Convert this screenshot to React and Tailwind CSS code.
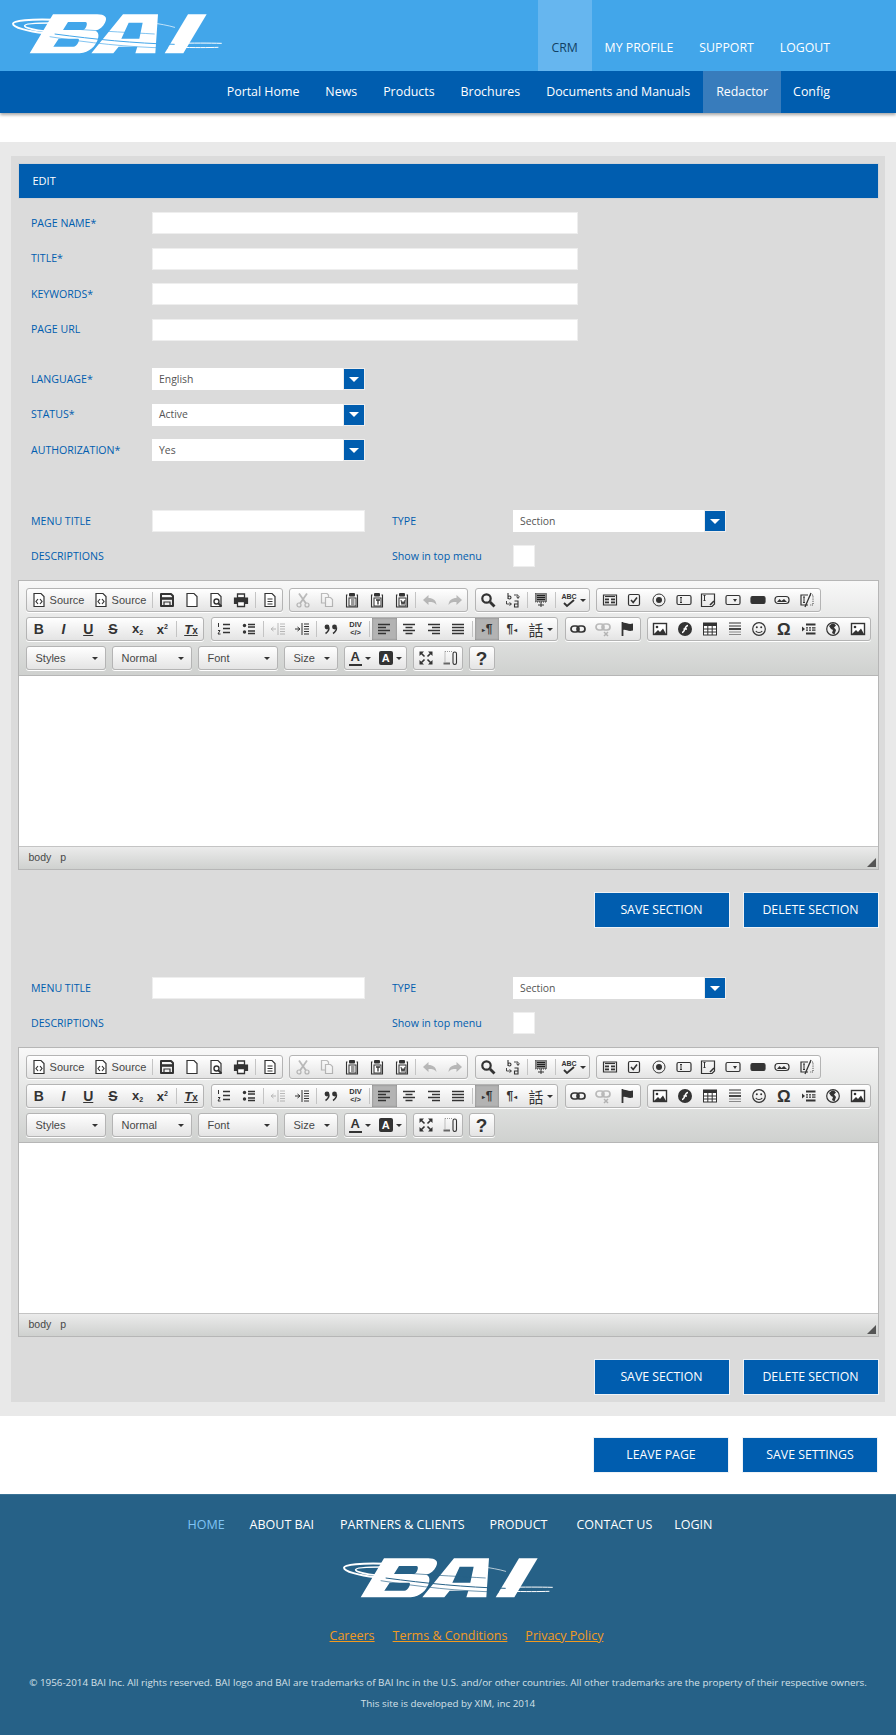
const Logo = ({ bg, className }) => (
  <svg viewBox="0 0 660 144" className={className}>
    <g fill="none" stroke="#fff" strokeLinecap="round">
      <path d="M135 29C70 27 15 31 15 41C15 52 60 64 110 70" strokeWidth="6" />
      <path d="M130 39C90 39 50 41 50 47C50 53 80 60 115 64" strokeWidth="5" />
      <path d="M500 100C560 99 600 99 640 100" strokeWidth="3" />
      <path d="M510 112C560 113 600 113 630 112" strokeWidth="3" />
      <path d="M430 38C455 42 480 46 500 52" strokeWidth="2" />
    </g>
    <path
      fillRule="evenodd"
      fill="#fff"
      d="M135 13H268C290 13 300 22 291 38C285 50 276 58 262 62C272 66 274 76 268 92C256 118 236 130 204 130H65ZM180 36L165 60H224C234 60 242 36 232 36ZM152 86L136 110H196C208 110 218 86 210 86Z"
    />
    <path
      fillRule="evenodd"
      fill="#fff"
      d="M345 13H450L442 130H382L388 110H332L316 130H250ZM362 38L340 86H394L404 38Z"
    />
    <path fill="#fff" d="M540 13H596L526 130H470Z" />
    <g fill="none" stroke={bg} strokeWidth="3">
      <path d="M140 72C260 88 380 100 500 103" />
      <path d="M210 58C290 64 370 68 440 72" strokeWidth="2" />
      <path d="M125 80C240 98 360 112 480 114" strokeWidth="2" />
    </g>
  </svg>
);

const I = ({ children, size = 16 }) => (
  <svg width={size} height={size} viewBox="0 0 16 16" fill="none" stroke="#333" strokeWidth="1.2">
    {children}
  </svg>
);

const Letter = ({ children, className }) => (
  <span className={`font-['Liberation_Sans',sans-serif] text-[#333] leading-none ${className}`}>{children}</span>
);

const Lines = ({ rows }) => (
  <I>
    {rows.map(([a, b, y], i) => (
      <path key={i} d={`M${a} ${y}H${b}`} strokeWidth="1.5" />
    ))}
  </I>
);

const Clip = ({ children }) => (
  <I>
    <path d="M3.5 3H2.5V15H13.5V3H12.5" strokeWidth="1.1" />
    <rect x="5" y="1" width="6" height="3.5" fill="#333" stroke="none" rx="1" />
    <rect x="5" y="6" width="7" height="8" fill="#fff" strokeWidth="1" />
    {children}
  </I>
);

const Page = ({ children }) => (
  <I>
    <path d="M3 1.5H10L13 4.5V14.5H3Z" fill="#fff" />
    {children}
  </I>
);

const icons = {
  source: (
    <Page>
      <path d="M7 7L5 9.5L7 12M9 7L11 9.5L9 12" strokeWidth="1.2" />
    </Page>
  ),
  save: (
    <I>
      <path d="M2 2H12L14 4V14H2Z" strokeWidth="2" strokeLinejoin="round" />
      <path d="M3 6.5H13" strokeWidth="2.6" />
      <path d="M5 10H11V14H5Z" strokeWidth="1.2" />
    </I>
  ),
  newpage: <Page />,
  preview: (
    <Page>
      <circle cx="8.5" cy="9.5" r="2.5" strokeWidth="1.4" />
      <path d="M10.5 11.5L13.5 14.5" strokeWidth="1.8" />
    </Page>
  ),
  print: (
    <I>
      <path d="M4.5 2H11.5V6H4.5Z" strokeWidth="1.3" />
      <path d="M1.5 6H14.5V11.5H1.5Z" fill="#333" />
      <path d="M4.5 9.5H11.5V14.5H4.5Z" fill="#fff" strokeWidth="1.3" />
    </I>
  ),
  templates: (
    <Page>
      <path d="M5.5 7H10.5M5.5 9.5H10.5M5.5 12H10.5" />
    </Page>
  ),
  cut: (
    <I>
      <circle cx="4" cy="13" r="2" />
      <circle cx="12" cy="13" r="2" />
      <path d="M5 11.5L12 1.5M11 11.5L4 1.5" strokeWidth="1.8" />
    </I>
  ),
  copy: (
    <I>
      <path d="M2.5 1.5H8L9.5 3V11H2.5Z" />
      <path d="M6.5 5.5H11.5L13.5 7.5V14.5H6.5Z" fill="#fff" />
    </I>
  ),
  paste: (
    <Clip>
      <path d="M7 8H10.5M7 10H10.5M7 12H10.5" strokeWidth="1" />
    </Clip>
  ),
  pastetext: (
    <Clip>
      <path d="M7 8H11M9 8V12.5" strokeWidth="1.3" />
    </Clip>
  ),
  pasteword: (
    <Clip>
      <path d="M7 8L8 12.5L9 9.5L10 12.5L11 8" strokeWidth="1" />
    </Clip>
  ),
  undo: (
    <I>
      <path d="M6.5 3V6C11 6 14 8 14.5 13C13 10.5 10.5 10 6.5 10V13L1 8Z" fill="#333" stroke="none" />
    </I>
  ),
  redo: (
    <I>
      <path d="M9.5 3V6C5 6 2 8 1.5 13C3 10.5 5.5 10 9.5 10V13L15 8Z" fill="#333" stroke="none" />
    </I>
  ),
  find: (
    <I>
      <circle cx="6.5" cy="6.5" r="4.2" strokeWidth="2.2" />
      <path d="M10 10L14.5 14.5" strokeWidth="2.8" />
    </I>
  ),
  replace: (
    <I>
      <path d="M3 1V7M3 5.5C3 3.5 6 3.5 6 5.5C6 7.5 3 7.5 3 5.5" strokeWidth="1.1" />
      <path d="M9 3H13V6M11.5 4.5L13 6.5L14.5 4.5" strokeWidth="0.9" />
      <path d="M1.5 9V12H6M4.5 10.5L6.5 12L4.5 13.5" strokeWidth="0.9" />
      <path d="M9.5 9H13V15H9.5V12H13" strokeWidth="1.1" />
    </I>
  ),
  selectall: (
    <I>
      <path d="M2.5 1.5H13.5V10H2.5Z" fill="#888" stroke="#333" strokeWidth="1" strokeDasharray="1 1" />
      <path d="M4 3.5H12M4 5.5H12M4 7.5H12" stroke="#222" />
      <path d="M8 10V15M5 13H11" strokeWidth="1" />
    </I>
  ),
  form: (
    <I>
      <path d="M1.5 3H14.5V13H1.5Z" />
      <path d="M3 4.5H13" strokeWidth="1.2" />
      <rect x="3" y="6.5" width="4" height="1.8" fill="#333" stroke="none" />
      <rect x="9" y="6.5" width="4" height="1.8" fill="#333" stroke="none" />
      <rect x="3" y="9.5" width="4" height="1.8" fill="#333" stroke="none" />
      <rect x="9" y="9.5" width="4" height="1.8" fill="#333" stroke="none" />
    </I>
  ),
  checkbox: (
    <I>
      <rect x="2.5" y="2.5" width="11" height="11" rx="1.5" />
      <path d="M5 8L7.2 10.5L11 5.5" strokeWidth="1.6" />
    </I>
  ),
  radio: (
    <I>
      <circle cx="8" cy="8" r="6" strokeWidth="1" />
      <circle cx="8" cy="8" r="3" fill="#333" stroke="none" />
    </I>
  ),
  textfield: (
    <I>
      <rect x="1" y="3.5" width="14" height="9" rx="1.5" />
      <path d="M4 5.5H6M4 10.5H6M5 5.5V10.5" strokeWidth="1" />
    </I>
  ),
  textarea: (
    <I>
      <path d="M1.5 2H14.5V12L12 14.5H1.5Z" />
      <path d="M3.5 3.5H5.5M3.5 8.5H5.5M4.5 3.5V8.5" strokeWidth="1" />
      <path d="M10 13L14 9" strokeWidth="1.6" />
    </I>
  ),
  selectbox: (
    <I>
      <rect x="1" y="3.5" width="14" height="9" rx="1.5" />
      <path d="M8 7H12L10 10Z" fill="#333" stroke="none" />
    </I>
  ),
  button: (
    <I>
      <rect x="1" y="4.5" width="14" height="7" rx="1.5" fill="#333" />
    </I>
  ),
  imagebutton: (
    <I>
      <rect x="1" y="4.5" width="14" height="7" rx="3" />
      <path d="M3 10L5.5 7L7.5 9L10 7L13 10Z" fill="#333" stroke="none" />
    </I>
  ),
  hiddenfield: (
    <I>
      <path d="M9 3H2V13H9" />
      <path d="M4 5H6M4 10.5H6M5 5V10.5" strokeWidth="1" />
      <path d="M12 1L6 15" strokeWidth="1.3" />
      <path d="M11 3H14V13H11" strokeWidth="1" strokeDasharray="1 1.2" />
    </I>
  ),
  bold: <Letter className="text-[14px] font-bold">B</Letter>,
  italic: <Letter className="text-[14px] font-bold italic">I</Letter>,
  underline: <Letter className="text-[14px] font-bold underline">U</Letter>,
  strike: <Letter className="text-[14px] font-bold line-through">S</Letter>,
  sub: (
    <Letter className="text-[13px] font-bold">
      x<span className="text-[7px] align-[-2px]">2</span>
    </Letter>
  ),
  sup: (
    <Letter className="text-[13px] font-bold">
      x<span className="text-[7px] align-[5px]">2</span>
    </Letter>
  ),
  clear: (
    <Letter className="text-[13px] font-bold italic underline">
      T<span className="text-[10px] not-italic">x</span>
    </Letter>
  ),
  numlist: (
    <I>
      <path d="M7 3.5H14M7 7.5H14M7 11.5H14" strokeWidth="1.6" />
      <path d="M2.5 2V6M2 9.5H4L2 13H4.5" strokeWidth="1" />
    </I>
  ),
  bullet: (
    <I>
      <circle cx="3.5" cy="4.5" r="1.7" fill="#333" stroke="none" />
      <circle cx="3.5" cy="11" r="1.7" fill="#333" stroke="none" />
      <path d="M7 3.5H14M7 6H14M7 10H14M7 12.5H14" strokeWidth="1.3" />
    </I>
  ),
  outdent: (
    <I>
      <path d="M8 2V14" strokeWidth="1" />
      <path d="M10 3H15M10 5.5H15M10 8H15M10 10.5H15M10 13H15" strokeWidth="1" />
      <path d="M1 8H6M3.5 6L1 8L3.5 10" strokeWidth="1" />
    </I>
  ),
  indent: (
    <I>
      <path d="M8 2V14" strokeWidth="1" />
      <path d="M10 3H15M10 5.5H15M10 8H15M10 10.5H15M10 13H15" strokeWidth="1" />
      <path d="M1 8H6M3.5 6L6 8L3.5 10" strokeWidth="1" />
    </I>
  ),
  quote: (
    <I>
      <circle cx="4" cy="6" r="2.4" fill="#333" stroke="none" />
      <circle cx="11.5" cy="6" r="2.4" fill="#333" stroke="none" />
      <path d="M6 6.5C6 9 5 11 2.5 12.5M13.5 6.5C13.5 9 12.5 11 10 12.5" strokeWidth="1.5" />
    </I>
  ),
  div: (
    <div className="flex flex-col items-center font-['Liberation_Sans',sans-serif] text-[7.5px] font-bold leading-[8px] text-[#333]">
      <span>DIV</span>
      <span>&lt;/&gt;</span>
    </div>
  ),
  left: <Lines rows={[[2, 14, 3.5], [2, 10, 6.5], [2, 14, 9.5], [2, 10, 12.5]]} />,
  center: <Lines rows={[[2, 14, 3.5], [4.5, 11.5, 6.5], [2, 14, 9.5], [4.5, 11.5, 12.5]]} />,
  right: <Lines rows={[[2, 14, 3.5], [6, 14, 6.5], [2, 14, 9.5], [6, 14, 12.5]]} />,
  justify: <Lines rows={[[2, 14, 3.5], [2, 14, 6.5], [2, 14, 9.5], [2, 14, 12.5]]} />,
  ltr: (
    <Letter className="text-[12px] font-bold">
      <span className="mr-[1px] align-[1px] text-[6px]">▸</span>¶
    </Letter>
  ),
  rtl: (
    <Letter className="text-[12px] font-bold">
      ¶<span className="ml-[1px] align-[1px] text-[6px]">◂</span>
    </Letter>
  ),
  lang: <span className="font-['Noto_Sans_CJK_TC',sans-serif] text-[15px] leading-none text-[#333]">話</span>,
  spell: (
    <I>
      <text x="0.5" y="7" fontSize="7" fontWeight="700" fill="#333" stroke="none" fontFamily="Liberation Sans">ABC</text>
      <path d="M3 11L6 14L13 8" strokeWidth="1.9" />
    </I>
  ),
  link: (
    <I>
      <rect x="1" y="5" width="8" height="6" rx="3" strokeWidth="1.7" />
      <rect x="7" y="5" width="8" height="6" rx="3" strokeWidth="1.7" />
    </I>
  ),
  unlink: (
    <I>
      <rect x="1" y="3" width="8" height="6" rx="3" strokeWidth="1.7" />
      <rect x="7" y="3" width="8" height="6" rx="3" strokeWidth="1.7" />
      <path d="M9 11L13 15M13 11L9 15" strokeWidth="1.5" />
    </I>
  ),
  anchor: (
    <I>
      <path d="M3.5 1V15" strokeWidth="1.8" />
      <path d="M4 2C7 1 9 4 14 2.5V9.5C9 11 7 8 4 9Z" fill="#333" stroke="none" />
    </I>
  ),
  image: (
    <I>
      <rect x="1.5" y="2.5" width="13" height="11" fill="#fff" strokeWidth="1.4" />
      <circle cx="5" cy="6" r="1.3" fill="#333" stroke="none" />
      <path d="M2 13L6 9L8 11L11 7.5L14 13Z" fill="#333" stroke="none" />
    </I>
  ),
  flash: (
    <I>
      <circle cx="8" cy="8" r="7" fill="#333" stroke="none" />
      <path d="M5 11.5C8 11.5 7.5 4.5 11 4.5M6.5 8H10" stroke="#fff" strokeWidth="1.4" />
    </I>
  ),
  table: (
    <I>
      <rect x="1.5" y="2" width="13" height="12" fill="#fff" strokeWidth="1" />
      <rect x="1.5" y="2" width="13" height="3" fill="#333" stroke="none" />
      <path d="M1.5 8H14.5M1.5 11H14.5M5.8 5V14M10.2 5V14" strokeWidth="1" />
    </I>
  ),
  hr: (
    <I>
      <path d="M2 2H14M2 5H14" strokeWidth="1.2" />
      <path d="M2 8H14" strokeWidth="1.8" />
      <path d="M2 11H14M2 13.5H14" stroke="#888" strokeWidth="1.2" />
    </I>
  ),
  smiley: (
    <I>
      <circle cx="8" cy="8" r="6.3" />
      <circle cx="5.8" cy="6.3" r="1" fill="#333" stroke="none" />
      <circle cx="10.2" cy="6.3" r="1" fill="#333" stroke="none" />
      <path d="M4.8 10C6 12 10 12 11.2 10" />
    </I>
  ),
  omega: <Letter className="text-[17px] font-bold">Ω</Letter>,
  pagebreak: (
    <I>
      <path d="M5 3.5H14.5M5 12.5H14.5" strokeWidth="2" />
      <path d="M5 6.8H7M8 6.8H10M11 6.8H14.5M5 9.2H7M8 9.2H10M11 9.2H14.5" strokeWidth="1.3" />
      <path d="M1 5.5L4 8L1 10.5Z" fill="#333" stroke="none" />
    </I>
  ),
  iframe: (
    <I>
      <circle cx="8" cy="8" r="6.3" />
      <path d="M7 2.5L4 5L6 8L8 9L7 12L9.5 13.5L11 9L9 6.5L11 4.5L9 2.5Z" fill="#333" stroke="none" />
    </I>
  ),
  maximize: (
    <I>
      <path d="M1.5 6V1.5H6Z M10 1.5H14.5V6Z M1.5 10V14.5H6Z M10 14.5H14.5V10Z" fill="#333" stroke="none" />
      <path d="M3 3L6.5 6.5M13 3L9.5 6.5M3 13L6.5 9.5M13 13L9.5 9.5" strokeWidth="1.6" />
    </I>
  ),
  showblocks: (
    <I>
      <path d="M3 1.5H10M3 1.5V12" stroke="#999" strokeDasharray="1 1" />
      <path d="M1.5 12.5H8V14.5H1.5Z" fill="#666" stroke="none" />
      <rect x="11" y="2" width="3.5" height="12.5" rx="1.7" strokeWidth="1.1" />
    </I>
  ),
  help: <Letter className="text-[19px] font-bold">?</Letter>,
  color: (
    <div className="flex flex-col items-center">
      <Letter className="text-[13px] font-bold">A</Letter>
      <span className="mt-[1px] h-[2px] w-[13px] bg-[#333]" />
    </div>
  ),
  bgcolor: (
    <span className="flex h-[14px] w-[14px] items-center justify-center rounded-[2px] bg-[#333] font-['Liberation_Sans',sans-serif] text-[11px] font-bold text-white">
      A
    </span>
  ),
};

const S = { sep: true };
const Ic = (name, w) => ({ name, w });
const Off = (name) => ({ name, off: true });
const On = (name) => ({ name, on: true });

const toolbar = [
  [
    [{ name: 'source', label: 'Source', w: 62 }, { name: 'source', label: 'Source', w: 62 }, S, Ic('save'), Ic('newpage'), Ic('preview'), Ic('print'), S, Ic('templates')],
    [Off('cut'), Off('copy'), Ic('paste'), Ic('pastetext'), Ic('pasteword'), S, Off('undo'), Off('redo')],
    [Ic('find'), Ic('replace'), S, Ic('selectall'), S, { name: 'spell', w: 31, arrow: true }],
    [Ic('form'), Ic('checkbox'), Ic('radio'), Ic('textfield'), Ic('textarea'), Ic('selectbox'), Ic('button'), Ic('imagebutton'), Ic('hiddenfield')],
  ],
  [
    [Ic('bold'), Ic('italic'), Ic('underline'), Ic('strike'), Ic('sub'), Ic('sup'), S, Ic('clear')],
    [Ic('numlist'), Ic('bullet'), S, Off('outdent'), Ic('indent'), S, Ic('quote'), Ic('div'), S, On('left'), Ic('center'), Ic('right'), Ic('justify'), S, On('ltr'), Ic('rtl'), { name: 'lang', w: 33, arrow: true }],
    [Ic('link'), Off('unlink'), Ic('anchor')],
    [Ic('image'), Ic('flash'), Ic('table'), Ic('hr'), Ic('smiley'), Ic('omega'), Ic('pagebreak'), Ic('iframe'), Ic('image')],
  ],
];

const ToolButton = ({ item }) => {
  if (item.sep) {
    return <span className="mx-[1.5px] h-[16px] w-[1px] bg-[#c4c4c4]" />;
  }
  const width = item.w || 24.7;
  return (
    <span
      className={`flex h-full items-center justify-center gap-[3px] ${item.on ? 'bg-[#b3b3b3] shadow-[inset_0_0_2px_#777]' : ''} ${item.off ? 'opacity-30' : ''}`}
      style={{ width }}
    >
      {icons[item.name]}
      {item.label && <span className="font-['Liberation_Sans',sans-serif] text-[11px] text-[#474747]">{item.label}</span>}
      {item.arrow && <span className="border-x-[3px] border-t-[3px] border-x-transparent border-t-[#333]" />}
    </span>
  );
};

const groupClass = 'flex h-[24px] items-center rounded-[3px] border border-[#b4b4b4] bg-gradient-to-b from-white to-[#e4e4e4] shadow-[0_1px_0_#fff]';

const Group = ({ children, className = '' }) => <div className={`${groupClass} ${className}`}>{children}</div>;

const Combo = ({ label, w }) => (
  <div className={`${groupClass} justify-between pl-[9px] pr-[7px] ${w}`}>
    <span className="font-['Liberation_Sans',sans-serif] text-[11px] text-[#474747]">{label}</span>
    <span className="border-x-[3px] border-t-[3px] border-x-transparent border-t-[#333]" />
  </div>
);

const Editor = () => (
  <div className="border border-[#b6b6b6] bg-white">
    <div className="flex h-[95px] flex-col gap-[5px] border-b border-[#b6b6b6] bg-gradient-to-b from-[#f8f8f8] to-[#cfd1cf] pl-[7px] pt-[7px]">
      {toolbar.map((row, r) => (
        <div key={r} className="flex gap-[6.5px]">
          {row.map((group, g) => (
            <Group key={g}>
              {group.map((item, i) => (
                <ToolButton key={i} item={item} />
              ))}
            </Group>
          ))}
        </div>
      ))}
      <div className="flex gap-[6px]">
        <Combo label="Styles" w="w-[80px]" />
        <Combo label="Normal" w="w-[80px]" />
        <Combo label="Font" w="w-[80px]" />
        <Combo label="Size" w="w-[54px]" />
        <Group>
          <ToolButton item={{ name: 'color', w: 30.5, arrow: true }} />
          <ToolButton item={{ name: 'bgcolor', w: 30.5, arrow: true }} />
        </Group>
        <Group>
          <ToolButton item={{ name: 'maximize', w: 24 }} />
          <ToolButton item={{ name: 'showblocks', w: 24 }} />
        </Group>
        <Group>
          <ToolButton item={{ name: 'help', w: 24 }} />
        </Group>
      </div>
    </div>
    <div className="h-[170px]" />
    <div className="flex h-[23px] items-center justify-between border-t border-[#c4c4c4] bg-gradient-to-b from-[#ebebeb] to-[#cfd1cf] pl-[10px] pr-[2px]">
      <span className="flex gap-[9px] font-['Liberation_Sans',sans-serif] text-[10.5px] text-[#484848]">
        <span>body</span>
        <span>p</span>
      </span>
      <span className="mt-[8px] border-b-[9px] border-l-[9px] border-b-[#555] border-l-transparent" />
    </div>
  </div>
);

const Label = ({ children }) => <span className="w-[121px] shrink-0 pt-[1px] text-[10.6px] text-[#005daf]">{children}</span>;

const TextInput = ({ w }) => <input type="text" className={`h-[22px] border border-[#eee] bg-white ${w}`} />;

const SelectBox = ({ value }) => (
  <div className="flex h-[22px] w-[213px] items-center justify-between bg-white pl-[7px]">
    <span className="pt-[1px] text-[10.4px] text-[#555]">{value}</span>
    <span className="flex h-[22px] w-[22px] items-center justify-center border border-[#eee] bg-[#005daf]">
      <span className="border-x-[5px] border-t-[5px] border-x-transparent border-t-white" />
    </span>
  </div>
);

const Row = ({ label, children, className = '' }) => (
  <div className={`flex h-[22px] items-center pl-[13.5px] ${className}`}>
    <Label>{label}</Label>
    {children}
  </div>
);

const ActionButton = ({ children }) => (
  <button className="h-[36px] w-[136px] border border-[#eef2f6] bg-[#005daf] text-[12.3px] uppercase text-white">{children}</button>
);

const Section = ({ className = '' }) => (
  <div className={className}>
    <div className="flex items-center">
      <Row label="MENU TITLE">
        <TextInput w="w-[213px]" />
      </Row>
      <span className="ml-[27px] w-[121px] pt-[1px] text-[10.6px] text-[#005daf]">TYPE</span>
      <SelectBox value="Section" />
    </div>
    <div className="mt-[13px] flex items-center">
      <Row label="DESCRIPTIONS">
        <span className="w-[213px]" />
      </Row>
      <span className="ml-[27px] w-[121px] pt-[1px] text-[10.6px] text-[#005daf]">Show in top menu</span>
      <span className="h-[22px] w-[22px] border border-[#eee] bg-white" />
    </div>
    <div className="mt-[13px]">
      <Editor />
    </div>
    <div className="mt-[22px] flex justify-end gap-[13px]">
      <ActionButton>Save section</ActionButton>
      <ActionButton>Delete section</ActionButton>
    </div>
  </div>
);

const topLinks = ['MY PROFILE', 'SUPPORT', 'LOGOUT'];
const navLinks = ['Portal Home', 'News', 'Products', 'Brochures', 'Documents and Manuals'];
const footerLinks = [
  ['HOME', 'mr-[25px] text-[#7fc4f5]'],
  ['ABOUT BAI', 'mr-[26px] text-white'],
  ['PARTNERS & CLIENTS', 'mr-[25px] text-white'],
  ['PRODUCT', 'mr-[29px] text-white'],
  ['CONTACT US', 'mr-[22px] text-white'],
  ['LOGIN', 'text-white'],
];

export default function App() {
  return (
    <div className="w-[896px] bg-white font-['Open_Sans',sans-serif]">
      <header className="relative z-10 shadow-[0_2px_3px_rgba(0,0,0,0.35)]">
        <div className="flex h-[71px] justify-between bg-[#42a6ea] pr-[53px]">
          <Logo bg="#42a6ea" className="ml-[8px] mt-[10px] h-[48px] w-[220px]" />
          <div className="flex text-[12.3px]">
            <a className="flex w-[54px] items-end justify-center bg-[#66b6ef] pb-[14px] text-[#123f63]">CRM</a>
            {topLinks.map((t) => (
              <a key={t} className="flex items-end px-[13px] pb-[14px] text-white">{t}</a>
            ))}
          </div>
        </div>
        <nav className="flex h-[42px] justify-end bg-[#005daf] pr-[54px] text-[12.4px] text-white">
          {navLinks.map((t) => (
            <a key={t} className="flex items-center px-[13px]">{t}</a>
          ))}
          <a className="flex items-center bg-[#387cbc] px-[13px]">Redactor</a>
          <a className="flex items-center px-[12px]">Config</a>
        </nav>
      </header>

      <div className="mt-[29px] bg-[#e9e9e9] px-[11px] py-[14px]">
        <div className="bg-[#dbdbdb] p-[7px] px-[6.5px]">
          <div className="flex h-[36px] items-center border border-[#d0d4d8] bg-[#005daf] pl-[14px] text-[11px] text-white">EDIT</div>
          <div className="mt-[13px] flex flex-col gap-[13.5px]">
            <Row label="PAGE NAME*"><TextInput w="w-[426px]" /></Row>
            <Row label="TITLE*"><TextInput w="w-[426px]" /></Row>
            <Row label="KEYWORDS*"><TextInput w="w-[426px]" /></Row>
            <Row label="PAGE URL"><TextInput w="w-[426px]" /></Row>
          </div>
          <div className="mt-[27.5px] flex flex-col gap-[13.5px]">
            <Row label="LANGUAGE*"><SelectBox value="English" /></Row>
            <Row label="STATUS*"><SelectBox value="Active" /></Row>
            <Row label="AUTHORIZATION*"><SelectBox value="Yes" /></Row>
          </div>
          <Section className="mt-[49px]" />
          <Section className="mt-[49px]" />
        </div>
      </div>

      <div className="flex justify-end gap-[13px] pb-[21px] pr-[18px] pt-[21px]">
        <ActionButton>Leave page</ActionButton>
        <ActionButton>Save settings</ActionButton>
      </div>

      <footer className="h-[241px] border-t border-[#3a7396] bg-[#266187] pt-[21px] text-center">
        <div className="flex justify-center pl-[4px] text-[12.5px] leading-[18px]">
          {footerLinks.map(([t, c]) => (
            <a key={t} className={c}>{t}</a>
          ))}
        </div>
        <Logo bg="#266187" className="ml-[339px] mt-[20px] h-[48px] w-[220px]" />
        <div className="mt-[24px] flex justify-center gap-[18px] pl-[37px] text-[12.5px] leading-[20px] text-[#f29a1f]">
          <a className="underline">Careers</a>
          <a className="underline">Terms &amp; Conditions</a>
          <a className="underline">Privacy Policy</a>
        </div>
        <p className="mt-[28px] text-[9.85px] leading-[16px] text-[#d5e0e8]">
          © 1956-2014 BAI Inc. All rights reserved. BAI logo and BAI are trademarks of BAI Inc in the U.S. and/or other countries. All other trademarks are the property of their respective owners.
        </p>
        <p className="mt-[5px] text-[9.85px] leading-[16px] text-[#d5e0e8]">This site is developed by XIM, inc 2014</p>
      </footer>
    </div>
  );
}
